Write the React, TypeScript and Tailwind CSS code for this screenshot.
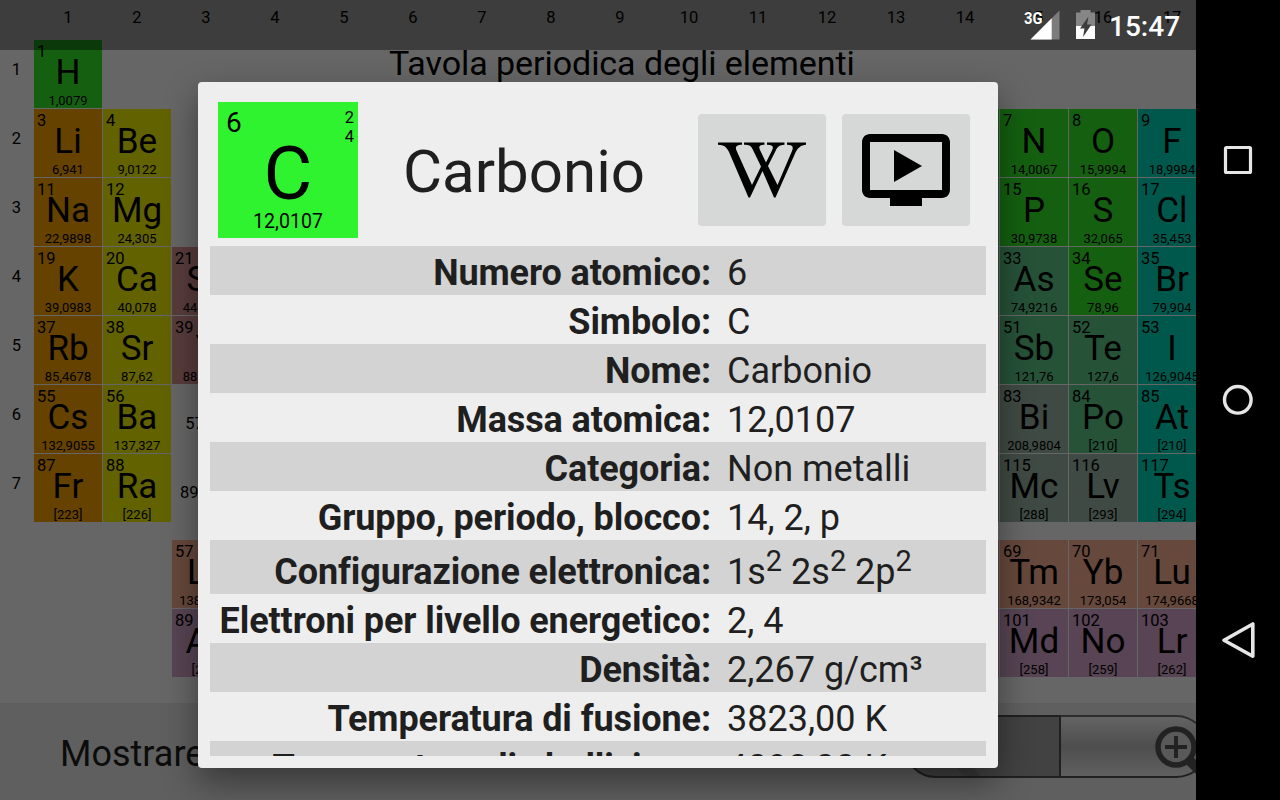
import React from "react";

const categories = {
  nonmetal: "bg-[#34f02a]",
  alkali: "bg-[#ffa500]",
  alkaline: "bg-[#f5f500]",
  transition: "bg-[#dc9696]",
  metalloid: "bg-[#5fcd8c]",
  metal: "bg-[#a0b9aa]",
  halogen: "bg-[#00dcbe]",
  lanthanide: "bg-[#ffb496]",
  actinide: "bg-[#dcaad2]",
} as const;

type Category = keyof typeof categories;
type Element = [col: number, row: number, n: string, symbol: string, mass: string, category: Category];

const elements: Element[] = [
  [1, 1, "1", "H", "1,0079", "nonmetal"],
  [1, 2, "3", "Li", "6,941", "alkali"],
  [1, 3, "11", "Na", "22,9898", "alkali"],
  [1, 4, "19", "K", "39,0983", "alkali"],
  [1, 5, "37", "Rb", "85,4678", "alkali"],
  [1, 6, "55", "Cs", "132,9055", "alkali"],
  [1, 7, "87", "Fr", "[223]", "alkali"],
  [2, 2, "4", "Be", "9,0122", "alkaline"],
  [2, 3, "12", "Mg", "24,305", "alkaline"],
  [2, 4, "20", "Ca", "40,078", "alkaline"],
  [2, 5, "38", "Sr", "87,62", "alkaline"],
  [2, 6, "56", "Ba", "137,327", "alkaline"],
  [2, 7, "88", "Ra", "[226]", "alkaline"],
  [3, 4, "21", "Sc", "44,9559", "transition"],
  [3, 5, "39", "Y", "88,9058", "transition"],
  [3, 9, "57", "La", "138,9055", "lanthanide"],
  [3, 10, "89", "Ac", "[227]", "actinide"],
  [14, 2, "", "", "", "nonmetal"],
  [14, 3, "", "", "", "metalloid"],
  [14, 4, "", "", "", "metalloid"],
  [14, 5, "", "", "", "metal"],
  [14, 6, "", "", "", "metal"],
  [14, 7, "", "", "", "metal"],
  [14, 9, "", "", "", "lanthanide"],
  [14, 10, "", "", "", "actinide"],
  [15, 2, "7", "N", "14,0067", "nonmetal"],
  [15, 3, "15", "P", "30,9738", "nonmetal"],
  [15, 4, "33", "As", "74,9216", "metalloid"],
  [15, 5, "51", "Sb", "121,76", "metalloid"],
  [15, 6, "83", "Bi", "208,9804", "metal"],
  [15, 7, "115", "Mc", "[288]", "metal"],
  [15, 9, "69", "Tm", "168,9342", "lanthanide"],
  [15, 10, "101", "Md", "[258]", "actinide"],
  [16, 2, "8", "O", "15,9994", "nonmetal"],
  [16, 3, "16", "S", "32,065", "nonmetal"],
  [16, 4, "34", "Se", "78,96", "nonmetal"],
  [16, 5, "52", "Te", "127,6", "metalloid"],
  [16, 6, "84", "Po", "[210]", "metalloid"],
  [16, 7, "116", "Lv", "[293]", "metal"],
  [16, 9, "70", "Yb", "173,054", "lanthanide"],
  [16, 10, "102", "No", "[259]", "actinide"],
  [17, 2, "9", "F", "18,9984", "halogen"],
  [17, 3, "17", "Cl", "35,453", "halogen"],
  [17, 4, "35", "Br", "79,904", "halogen"],
  [17, 5, "53", "I", "126,9045", "halogen"],
  [17, 6, "85", "At", "[210]", "halogen"],
  [17, 7, "117", "Ts", "[294]", "halogen"],
  [17, 9, "71", "Lu", "174,9668", "lanthanide"],
  [17, 10, "103", "Lr", "[262]", "actinide"],
];

const groups = Array.from({ length: 17 }, (_, i) => i + 1);
const periods = [1, 2, 3, 4, 5, 6, 7];

const place = (col: number, row: number) => ({ gridColumn: col + 1, gridRow: row + 1 });

function ElementCell({ element }: { element: Element }) {
  const [col, row, n, symbol, mass, category] = element;
  return (
    <div
      style={place(col, row)}
      className={`flex flex-col items-center whitespace-nowrap ${categories[category]}`}
    >
      <span className="mt-[3px] h-[18px] self-start pl-[3px] text-[16.5px] leading-[18px]">{n}</span>
      <span className="-mt-[5px] h-[34px] text-[35px] leading-[34px]">{symbol}</span>
      <span className="mt-[3px] text-[13px] leading-[15px]">{mass}</span>
    </div>
  );
}

function PeriodicTable() {
  return (
    <div className="grid h-[703px] w-[1206px] shrink-0 grid-cols-[33px_repeat(17,68px)] grid-rows-[39px_repeat(7,68px)_16px_68px_68px] gap-px">
      {groups.map((g) => (
        <span key={g} style={place(g, 0)} className="pt-[8px] text-center text-[16.5px] leading-5">
          {g}
        </span>
      ))}
      {periods.map((p) => (
        <span key={p} style={place(0, p)} className="pt-[20px] text-center text-[16.5px] leading-5">
          {p}
        </span>
      ))}
      <h1 className="col-span-12 col-start-5 row-start-2 pl-[148px] pt-[3px] text-[34px] leading-[40px] tracking-[-0.06px]">
        Tavola periodica degli elementi
      </h1>
      <span style={place(3, 6)} className="pt-[29px] text-center text-[16.5px] leading-5">57-71</span>
      <span style={place(3, 7)} className="pr-px pt-[29px] text-center text-[16.5px] leading-5">89-103</span>
      {elements.map((e) => (
        <ElementCell key={`${e[0]}-${e[1]}`} element={e} />
      ))}
    </div>
  );
}

function ZoomControls() {
  return (
    <div className="mt-3 flex h-[63px] w-[304px] shrink-0">
      <div className="flex w-[157px] rounded-l-[32px] border-2 border-[#505050] bg-[#a6a6a6]">
        <svg className="h-[59px] w-[120px]" viewBox="0 0 120 59">
          <path d="M52 44 L70 62" stroke="#949494" strokeWidth="12" />
        </svg>
      </div>
      <div className="flex w-[147px] rounded-r-[32px] border-y-2 border-r-2 border-b-[#505050] border-r-[#606060] border-t-[#707070] bg-gradient-to-b from-[#f8f8f8] via-[#c2c2c2] to-[#f0f0f0]">
        <svg className="ml-[90px] h-[59px] w-[54px]" viewBox="0 0 54 59">
          <path d="M38 43 L54 59" stroke="#555" strokeWidth="10" />
          <circle cx="25" cy="30" r="18" fill="#dedede" stroke="#555" strokeWidth="5.5" />
          <path d="M14 30h22M25 19v22" stroke="#555" strokeWidth="4" />
        </svg>
      </div>
    </div>
  );
}

function StatusBar() {
  return (
    <div className="absolute left-0 top-0 flex h-[50px] w-[1196px] bg-black/40 text-white">
      <svg className="ml-[1022px] h-[50px] w-[84px] shrink-0" viewBox="1022 0 84 50">
        <path d="M1030.500 39.500 L1059.500 10.500 V39.500Z" fill="#7c7c7c" />
        <path d="M1030.500 39.500 L1051.700 18.300 V39.500Z" fill="#fff" />
        <path d="M1076 12.500h4.500v-2.500h10v2.500h4.500v13.500h-19z" fill="#868686" />
        <path d="M1076 26h19v13h-19z" fill="#fff" />
        <path d="M1088.500 16.500l-8.500 12h4.500l-1.500 8.500 8.500-12.500h-4.500z" fill="#3d3d3d" />
        <text x="1024" y="23.500" fontSize="16.500" fontWeight="700" fill="#fff" textLength="18.500" lengthAdjust="spacingAndGlyphs">3G</text>
      </svg>
      <span className="pl-[3px] pt-[10px] text-[28px] font-medium leading-[34px]">15:47</span>
    </div>
  );
}

function NavigationBar() {
  return (
    <nav className="flex h-[800px] w-[84px] shrink-0 bg-black">
      <svg className="h-[800px] w-[84px]" viewBox="0 0 84 800" fill="none" stroke="#e6e6e6">
        <rect x="29.500" y="147.500" width="25" height="25" rx="1" strokeWidth="3.200" />
        <circle cx="41.800" cy="399.800" r="13.300" strokeWidth="3.400" />
        <path d="M56.800 624 V656.300 L28 640.200Z" strokeWidth="3.600" strokeLinejoin="round" />
      </svg>
    </nav>
  );
}

const properties: [string, React.ReactNode][] = [
  ["Numero atomico:", "6"],
  ["Simbolo:", "C"],
  ["Nome:", "Carbonio"],
  ["Massa atomica:", "12,0107"],
  ["Categoria:", "Non metalli"],
  ["Gruppo, periodo, blocco:", "14, 2, p"],
  ["Configurazione elettronica:", "config"],
  ["Elettroni per livello energetico:", "2, 4"],
  ["Densità:", "2,267 g/cm³"],
  ["Temperatura di fusione:", "3823,00 K"],
  ["Temperatura di ebollizione:", "4098,00 K"],
];

function Sup() {
  return <sup className="relative -top-[13px] align-baseline text-[29px] leading-none">2</sup>;
}

function WikipediaLogo() {
  return (
    <svg className="h-[56px] w-[88px]" viewBox="0 0 88 56">
      <path d="M0 0.500H24V2.800C18 3 17 5 18.500 8.500L34 43L43 24.500L34.500 7C32.500 3.500 31 2.900 26 2.800V.5H46.500V2.800C41 3 40.500 4.500 42 8L48 20.500L54 8.500C56 4 54.500 3 49 2.800V.5H66.500V2.800C61 3 59.500 5 57.500 9L50 24L59.500 43L74 9C76 4.500 74 3 69 2.800V.5H88V2.800C83 3.200 80 5.500 77.500 10.500L57.500 55.500H56L44.500 29L32 55.500H30.500L11 10C8.500 5 6 3 0 2.800Z" />
    </svg>
  );
}

function Dialog() {
  return (
    <section className="absolute left-[198px] top-[82px] flex h-[686px] w-[800px] flex-col rounded-[4px] bg-[#eeeeee] px-3 pb-3 text-[#1f1f1f] shadow-[0_14px_34px_rgba(0,0,0,0.42)]">
      <header className="flex h-[164px] shrink-0 pl-2 pt-5">
        <div className="flex h-[136px] w-[140px] flex-col items-center bg-[#30f330] text-black">
          <div className="flex h-[42px] w-full justify-between pl-2 pr-[4px]">
            <span className="pt-[5px] text-[28px] leading-8">6</span>
            <span className="pt-[6px] text-right text-[16.5px] leading-[19px]">2<br />4</span>
          </div>
          <span className="h-[58px] text-[75px] leading-[58px]">C</span>
          <span className="mt-[8px] text-[19.6px] leading-6">12,0107</span>
        </div>
        <h2 className="w-[332px] pt-[35px] text-center text-[60px] leading-[70px]">Carbonio</h2>
        <button className="ml-2 mt-3 flex h-[112px] w-32 items-center justify-center rounded-[4px] bg-[#d6d8d7] text-black">
          <WikipediaLogo />
        </button>
        <button className="ml-4 mt-3 flex h-[112px] w-32 items-center justify-center rounded-[4px] bg-[#d6d8d7] text-black">
          <svg className="h-24 w-24" viewBox="0 0 24 24">
            <path d="M21 3H3c-1.110 0-2 .89-2 2v12c0 1.100.89 2 2 2h5v2h8v-2h5c1.100 0 1.990-.9 1.990-2L23 5c0-1.110-.9-2-2-2zm0 14H3V5h18v12zM9 7v8l7-4z" />
          </svg>
        </button>
      </header>
      <dl className="h-[510px] overflow-hidden">
        {properties.map(([label, value], i) => (
          <div
            key={label}
            className={`flex whitespace-nowrap text-[36px] leading-[49px] ${i % 2 === 0 ? "bg-[#d3d3d3]" : ""} ${value === "config" ? "h-[54px] pt-[5px]" : "h-[49px]"}`}
          >
            <dt className="w-[501px] shrink-0 pt-[3px] text-right font-bold tracking-[-0.1px]">{label}</dt>
            <dd className="pl-[16px] pt-[3px]">
              {value === "config" ? (
                <>1s<Sup /> 2s<Sup /> 2p<Sup /></>
              ) : (
                value
              )}
            </dd>
          </div>
        ))}
      </dl>
    </section>
  );
}

export default function App() {
  return (
    <div className="relative flex h-[800px] w-[1280px] overflow-hidden bg-black font-[Roboto,sans-serif]">
      <main className="flex h-[800px] w-[1196px] shrink-0 flex-col overflow-hidden bg-white text-black">
        <PeriodicTable />
        <footer className="flex h-[97px] w-[1208px] shrink-0 justify-between bg-[#eeeeee]">
          <span className="pl-[60px] pt-[28px] text-[36px] leading-[46px] text-[#1f1f1f]">Mostrare</span>
          <ZoomControls />
        </footer>
      </main>
      <div className="absolute left-0 top-0 h-[800px] w-[1196px] bg-black/60" />
      <Dialog />
      <StatusBar />
      <NavigationBar />
    </div>
  );
}
